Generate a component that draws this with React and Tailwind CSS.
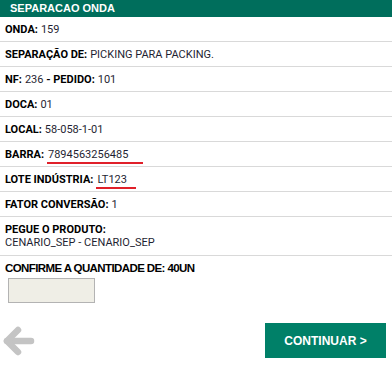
const rows = [
  { label: 'ONDA:', value: '159' },
  { label: 'SEPARAÇÃO DE:', value: 'PICKING PARA PACKING.' },
  { label: 'NF:', value: '236', extraLabel: ' - PEDIDO:', extraValue: '101' },
  { label: 'DOCA:', value: '01' },
  { label: 'LOCAL:', value: '58-058-1-01' },
  { label: 'BARRA:', value: '7894563256485', mark: 'w-[96px]' },
  { label: 'LOTE INDÚSTRIA:', value: 'LT123', mark: 'w-[40px]' },
  { label: 'FATOR CONVERSÃO:', value: '1' },
];

export default function App() {
  return (
    <div className="w-[392px] h-[366px] bg-white text-[11px] text-[#1f1f33] font-['Roboto',Arial,sans-serif]">
      {/* Header */}
      <div className="h-[17px] bg-[#006e5c] text-white font-bold flex items-center pl-[10px] leading-none font-['Liberation_Sans',Arial,sans-serif]">
        SEPARACAO ONDA
      </div>

      {/* Rows */}
      {rows.map((r, i) => (
        <div key={i} className="h-[25px] border-b border-[#d9d9d9] flex items-center pl-[5px] leading-none">
          <span className="font-bold text-black">{r.label}</span>
          {r.mark ? (
            <span className={`relative ml-[3px] inline-block ${r.mark}`}>
              <span className="pl-[1px]">{r.value}</span>
              <span className="absolute left-0 right-0 bottom-[-4px] h-[2px] bg-[#e0202a]" />
            </span>
          ) : (
            <span className="ml-[3px]">{r.value}</span>
          )}
          {r.extraLabel && (
            <>
              <span className="font-bold text-black whitespace-pre">{r.extraLabel}</span>
              <span className="ml-[3px]">{r.extraValue}</span>
            </>
          )}
        </div>
      ))}

      {/* Produto */}
      <div className="h-[39px] border-b border-[#d9d9d9] flex flex-col justify-center pl-[5px] leading-[13px]">
        <span className="font-bold text-black">PEGUE O PRODUTO:</span>
        <span>CENARIO_SEP - CENARIO_SEP</span>
      </div>

      {/* Quantidade */}
      <div className="pl-[5px] pt-[6px]">
        <div className="font-bold text-black text-[11.5px] tracking-[-0.6px] leading-[13px] font-['Liberation_Sans',Arial,sans-serif]">
          CONFIRME A QUANTIDADE DE: 40UN
        </div>
        <input
          type="text"
          className="mt-[3px] ml-[3px] block w-[87px] h-[25px] bg-[#efeee6] border border-[#b3b3b3] outline-none"
        />
      </div>

      {/* Footer */}
      <div className="flex items-center justify-between mt-[20px] pl-[2px] pr-[6px]">
        <svg width="34" height="34" viewBox="0 0 34 34" fill="none" stroke="#c4c4c4" strokeWidth="6.5" strokeLinecap="round" strokeLinejoin="round">
          <path d="M29 17H5" />
          <path d="M16 6L5 17l11 11" />
        </svg>
        <button className="w-[121px] h-[35px] bg-[#008068] text-white font-bold text-[12px] font-['Liberation_Sans',Arial,sans-serif]">
          CONTINUAR &gt;
        </button>
      </div>
    </div>
  );
}
